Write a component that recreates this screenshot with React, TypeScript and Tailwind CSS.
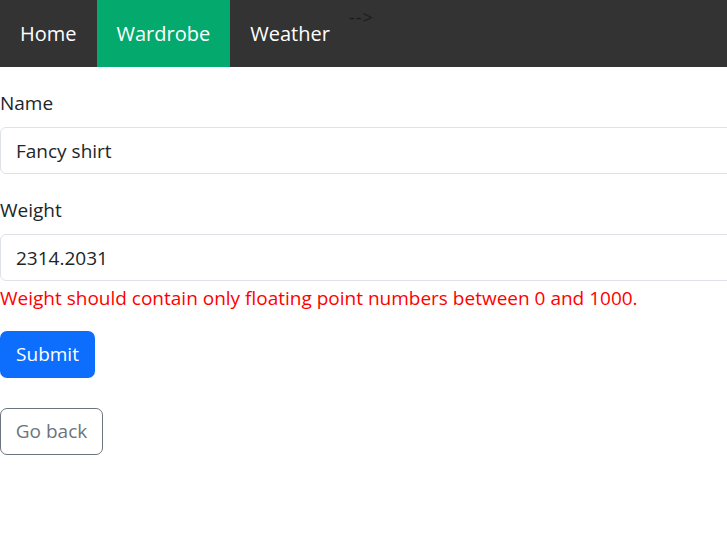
import React from 'react';

const App: React.FC = () => {
  const font = { fontFamily: '"Open Sans", "Noto Sans", sans-serif' };

  return (
    <div className="min-h-screen w-full overflow-hidden bg-white text-[#212529]" style={font}>
      {/* Top nav */}
      <nav className="relative flex h-[67px] bg-[#333333]">
        <a className="flex items-center px-[20px] text-[20px] text-white">Home</a>
        <a className="flex items-center bg-[#04AA6D] px-[20px] text-[20px] text-white">Wardrobe</a>
        <a className="flex items-center px-[20px] text-[20px] text-white">Weather</a>
        <span className="absolute left-[349px] top-[4px] text-[18px] tracking-[1px] text-[#1c1c1c]">--&gt;</span>
      </nav>

      {/* Form */}
      <form className="flex flex-col pt-[22px]">
        <label className="mb-[9px] text-[19px] leading-[29px]">Name</label>
        <input
          className="h-[47px] w-[calc(100%+30px)] rounded-[6px] border border-[#dee2e6] px-[15px] text-[19px] text-[#212529] outline-none"
          defaultValue="Fancy shirt"
        />
        <label className="mb-[9px] mt-[22px] text-[19px] leading-[29px]">Weight</label>
        <input
          className="h-[47px] w-[calc(100%+30px)] rounded-[6px] border border-[#dee2e6] px-[15px] text-[19px] text-[#212529] outline-none"
          defaultValue="2314.2031"
        />
        <p className="mt-[3px] text-[19px] leading-[29px] text-[#ff0000]">
          Weight should contain only floating point numbers between 0 and 1000.
        </p>
        <div className="mt-[18px]">
          <button type="button" className="h-[47px] w-[95px] rounded-[7px] bg-[#0d6efd] text-[19px] text-white">
            Submit
          </button>
        </div>
        <div className="mt-[30px]">
          <button type="button" className="h-[47px] w-[103px] rounded-[7px] border border-[#6c757d] bg-white text-[19px] text-[#6c757d]">
            Go back
          </button>
        </div>
      </form>
    </div>
  );
};

export default App;
